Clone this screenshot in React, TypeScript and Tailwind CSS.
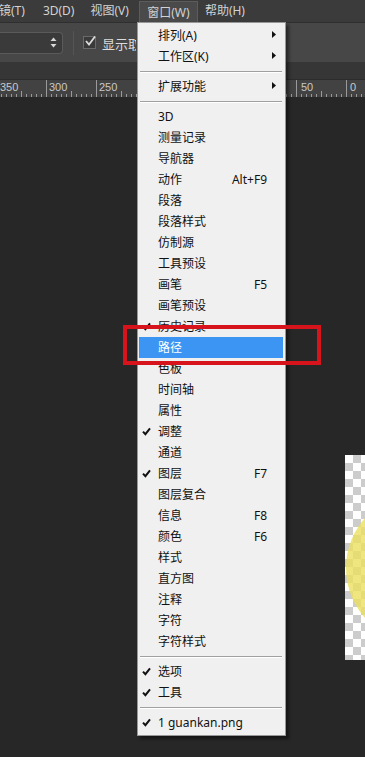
import React from "react";

type Row =
  | { sep: true }
  | { label: string; shortcut?: string; check?: boolean; arrow?: boolean; hl?: boolean };

const rows: Row[] = [
  { label: "排列(A)", arrow: true },
  { label: "工作区(K)", arrow: true },
  { sep: true },
  { label: "扩展功能", arrow: true },
  { sep: true },
  { label: "3D" },
  { label: "测量记录" },
  { label: "导航器" },
  { label: "动作", shortcut: "Alt+F9" },
  { label: "段落" },
  { label: "段落样式" },
  { label: "仿制源" },
  { label: "工具预设" },
  { label: "画笔", shortcut: "F5" },
  { label: "画笔预设" },
  { label: "历史记录", check: true },
  { label: "路径", hl: true },
  { label: "色板" },
  { label: "时间轴" },
  { label: "属性" },
  { label: "调整", check: true },
  { label: "通道" },
  { label: "图层", check: true, shortcut: "F7" },
  { label: "图层复合" },
  { label: "信息", shortcut: "F8" },
  { label: "颜色", shortcut: "F6" },
  { label: "样式" },
  { label: "直方图" },
  { label: "注释" },
  { label: "字符" },
  { label: "字符样式" },
  { sep: true },
  { label: "选项", check: true },
  { label: "工具", check: true },
  { sep: true },
  { label: "1 guankan.png", check: true },
];

const font = { fontFamily: '"Noto Sans", "Noto Sans CJK SC", sans-serif' };

function Check({ white }: { white?: boolean }) {
  return (
    <svg width="9" height="9" viewBox="0 0 9 9" className="absolute left-[3px] top-[6px]">
      <path d="M1 4.6 L3.4 7.2 L8 1.4" fill="none" stroke={white ? "#fff" : "#111"} strokeWidth="2" />
    </svg>
  );
}

function Ruler() {
  const ticks = [];
  for (let x = -4; x < 365; x += 5) {
    const rel = ((x - 46) % 50 + 50) % 50;
    const major = rel === 0;
    const mid = rel === 25;
    ticks.push(
      <div
        key={x}
        className={`absolute bottom-0 w-px bg-[#9a9a9a] ${major ? "h-[17px]" : mid ? "h-[6px]" : "h-[3px]"}`}
        style={{ left: x }}
      />
    );
  }
  const labels = [
    { x: 0, t: "350" },
    { x: 49, t: "300" },
    { x: 99, t: "250" },
    { x: 301, t: "50" },
    { x: 350, t: "0" },
  ];
  return (
    <div className="relative h-[18px] bg-[#424242] border-t border-[#2c2c2c]">
      {ticks}
      {labels.map((l) => (
        <span
          key={l.t}
          className="absolute top-[1px] text-[11px] leading-[12px] text-[#c9c9c9]"
          style={{ left: l.x, fontFamily: '"Liberation Sans", sans-serif' }}
        >
          {l.t}
        </span>
      ))}
    </div>
  );
}

export default function App() {
  return (
    <div className="relative w-[365px] h-[757px] overflow-hidden bg-[#272727] flex flex-col" style={font}>
      {/* menu bar */}
      <div className="h-[22px] bg-[#3b3b3b] flex items-center text-[12px] text-[#d2d2d2] shrink-0">
        <span className="ml-[-1px]">镜(T)</span>
        <span className="ml-[18px]">3D(D)</span>
        <span className="ml-[16px]">视图(V)</span>
        <span className="ml-[10px] h-[22px] mt-[2px] w-[59px] bg-[#4a4a4a] border border-b-0 border-[#5c5c5c] flex items-center justify-center">
          窗口(W)
        </span>
        <span className="ml-[7px]">帮助(H)</span>
      </div>
      {/* options bar */}
      <div className="h-[40px] bg-[#474747] border-t border-[#2f2f2f] flex items-center shrink-0">
        <div className="w-[63px] h-[22px] bg-[#3a3a3a] border border-[#5a5a5a] border-l-0 rounded-r-[4px] flex items-center justify-end pr-[5px]">
          <svg width="7" height="11" viewBox="0 0 7 11">
            <path d="M3.5 0.5 L6.5 4 L0.5 4 Z" fill="#d8d8d8" />
            <path d="M3.5 10.5 L6.5 7 L0.5 7 Z" fill="#d8d8d8" />
          </svg>
        </div>
        <div className="ml-[10px] w-px h-[24px] bg-[#2e2e2e] border-r border-[#555]" />
        <div className="ml-[9px] w-[13px] h-[13px] bg-[#3a3a3a] border border-[#6a6a6a] relative">
          <svg width="13" height="13" viewBox="0 0 13 13" className="absolute left-[0px] top-[-2px]">
            <path d="M2 6 L5 9.5 L11 1.5" fill="none" stroke="#dcdcdc" strokeWidth="1.8" />
          </svg>
        </div>
        <div className="ml-[6px] w-[34px] overflow-hidden">
          <span className="text-[13px] text-[#dcdcdc] whitespace-nowrap">显示取</span>
        </div>
      </div>
      {/* tab strip */}
      <div className="h-[17px] bg-[#363636] shrink-0" />
      <Ruler />
      {/* canvas */}
      <div className="relative flex-1 bg-[#272727]">
        <div
          className="absolute left-[345px] top-[358px] w-[40px] h-[205px] overflow-hidden"
          style={{
            backgroundColor: "#ffffff",
            backgroundImage:
              "linear-gradient(45deg,#cccccc 25%,transparent 25%,transparent 75%,#cccccc 75%),linear-gradient(45deg,#cccccc 25%,transparent 25%,transparent 75%,#cccccc 75%)",
            backgroundSize: "16px 16px",
            backgroundPosition: "0 0, 8px 8px",
          }}
        >
          <div className="absolute left-[1px] top-[38px] w-[150px] h-[150px] rounded-full bg-[#ebe060]/80" />
        </div>
      </div>

      {/* dropdown menu */}
      <div
        className="absolute left-[137px] top-[22px] w-[149px] bg-[#f0f0f0] border border-[#979797] pl-[1px] pr-[2px] pt-[2px] pb-[2px] shadow-[3px_3px_3px_rgba(0,0,0,0.45)]"
      >
        {rows.map((r, i) =>
          "sep" in r ? (
            <div key={i} className="h-[9px] flex items-center px-[1px]">
              <div className="w-full h-px bg-[#a0a0a0] border-b border-white box-content" />
            </div>
          ) : (
            <div
              key={i}
              className={`relative h-[21px] flex items-center pl-[19px] pr-[16px] text-[12px] ${
                r.hl ? "bg-[#3c95f2] text-white" : "text-[#111]"
              }`}
            >
              {r.check && <Check white={r.hl} />}
              <span className="flex-1 whitespace-nowrap">{r.label}</span>
              {r.shortcut && <span className="text-[12px]">{r.shortcut}</span>}
              {r.arrow && (
                <svg width="4" height="7" viewBox="0 0 4 7" className="absolute right-[7px] top-[6px]">
                  <path d="M0 0 L4 3.5 L0 7 Z" fill="#111" />
                </svg>
              )}
            </div>
          )
        )}
      </div>

      {/* red annotation box */}
      <div className="absolute left-[123px] top-[325px] w-[198px] h-[40px] border-[4px] border-[#d7141b]" />
    </div>
  );
}
